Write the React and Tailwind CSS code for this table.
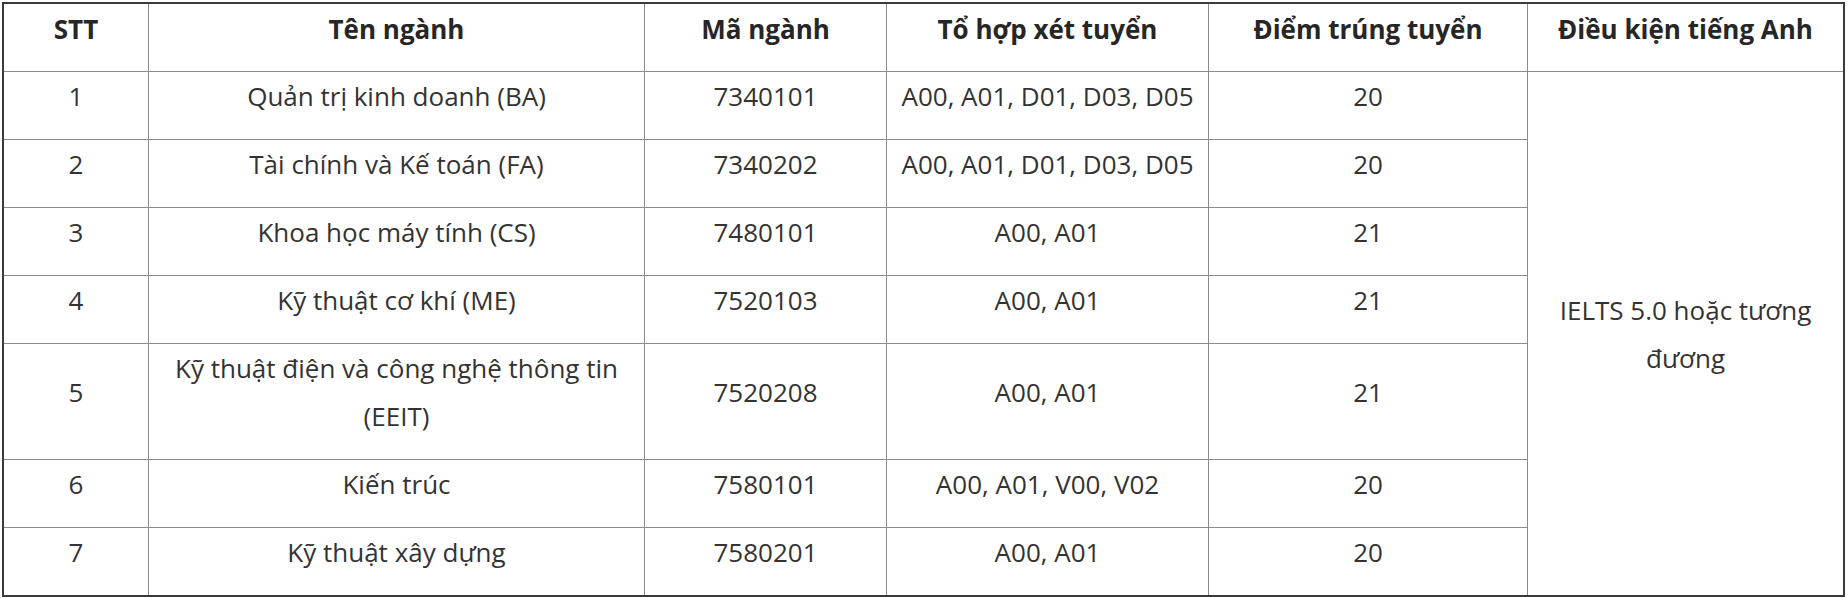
export default function App() {
  const headers = ["STT", "Tên ngành", "Mã ngành", "Tổ hợp xét tuyển", "Điểm trúng tuyển", "Điều kiện tiếng Anh"];
  const rows = [
    ["1", "Quản trị kinh doanh (BA)", "7340101", "A00, A01, D01, D03, D05", "20"],
    ["2", "Tài chính và Kế toán (FA)", "7340202", "A00, A01, D01, D03, D05", "20"],
    ["3", "Khoa học máy tính (CS)", "7480101", "A00, A01", "21"],
    ["4", "Kỹ thuật cơ khí (ME)", "7520103", "A00, A01", "21"],
    ["5", "Kỹ thuật điện và công nghệ thông tin (EEIT)", "7520208", "A00, A01", "21"],
    ["6", "Kiến trúc", "7580101", "A00, A01, V00, V02", "20"],
    ["7", "Kỹ thuật xây dựng", "7580201", "A00, A01", "20"],
  ];
  const cells = [];
  headers.forEach((h, i) => {
    cells.push(
      <div key={"h" + i} className="bg-white flex items-center justify-center text-center font-bold text-[#262626] leading-[48px] pt-px pb-[18px] px-2">
        <span>{h}</span>
      </div>
    );
  });
  rows.forEach((r, ri) => {
    r.forEach((c, ci) => {
      cells.push(
        <div key={ri + "-" + ci} className="bg-white flex items-center justify-center text-center text-[#333333] leading-[48px] pb-[19px] px-2">
          <span>{c}</span>
        </div>
      );
    });
    if (ri === 0) {
      cells.push(
        <div key="merged" className="row-span-7 bg-white flex items-center justify-center text-center text-[#333333] leading-[48px] px-2 pt-[1px]">
          <span>IELTS 5.0 hoặc tương đương</span>
        </div>
      );
    }
  });
  return (
    <div className="w-[1848px] h-[598px] bg-white pl-[2px] pt-[2px] font-['Open_Sans',sans-serif] text-[26px]">
      <div className="w-[1843px] border-2 border-[#3a3a3a] bg-[#8c8c8c] grid gap-px grid-cols-[144px_495px_241px_321px_318px_315px] grid-rows-[67px_67px_67px_67px_67px_115px_67px_67px]">
        {cells}
      </div>
    </div>
  );
}
